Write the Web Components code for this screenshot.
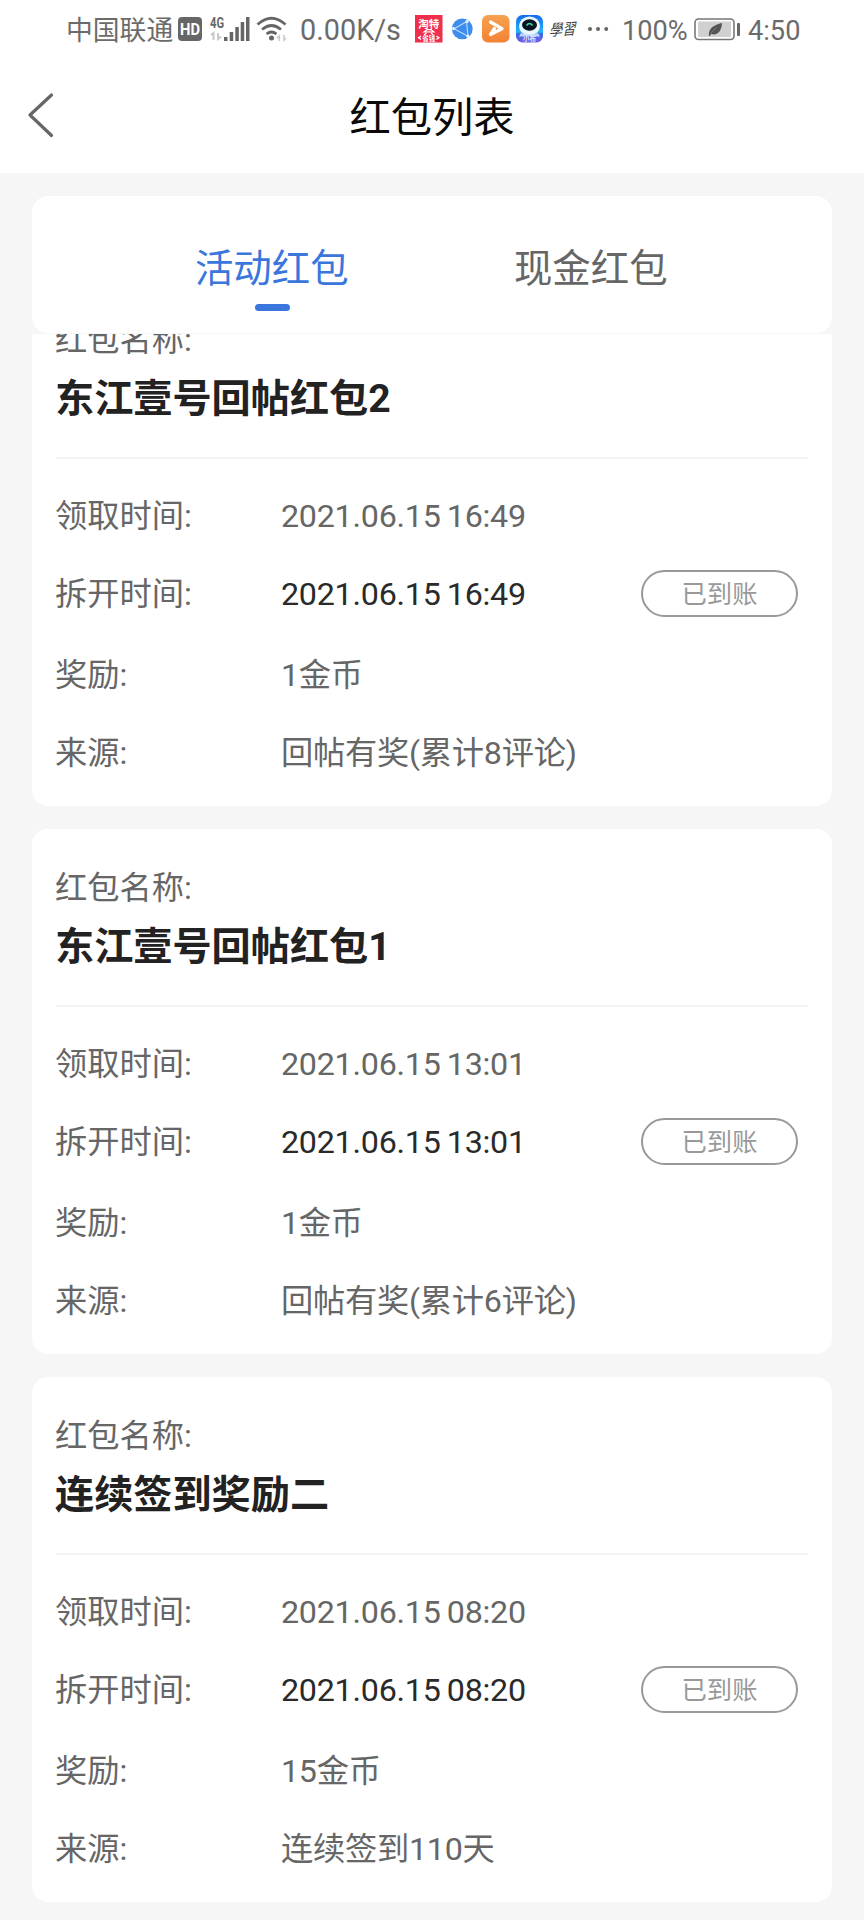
<!DOCTYPE html>
<html lang="zh-CN">
<head>
<meta charset="utf-8">
<title>红包列表</title>
<style>
html,body{margin:0;background:#f6f6f6}
body{width:864px;height:1920px;overflow:hidden;font-family:Roboto,"Noto Sans CJK SC",sans-serif;color:#666}
</style>
</head>
<body>
<red-packet-page></red-packet-page>
<script>
const define = (name, html) => {
  const t = document.createElement('template');
  t.innerHTML = html;
  customElements.define(name, class extends HTMLElement {
    constructor() {
      super();
      this.attachShadow({ mode: 'open' }).appendChild(t.content.cloneNode(true));
    }
  });
};

define('status-bar', `
<style>
:host{display:flex;align-items:center;height:60px;box-sizing:border-box;padding-left:66px;background:#fff;color:#6b6b6b;white-space:nowrap;line-height:36px}
svg{display:block;flex:none}
.carrier{width:111px;font-size:26.8px;padding-top:1px;box-sizing:border-box}
.speed{width:114px;font-size:28.8px;margin-left:11px}
.pct{font-size:27.2px;width:72px;margin-left:10px;padding-top:1px}
.time{font-size:27.2px;margin-left:8px;padding-top:1px}
span{flex:none}
text{font-family:Roboto,"Noto Sans CJK SC",sans-serif}
</style>
<span class="carrier">中国联通</span>
<svg width="112" height="60" viewBox="177 0 112 60">
  <rect x="178" y="17" width="24" height="24" rx="4" fill="#666"/>
  <text x="190" y="34.6" text-anchor="middle" font-size="16" font-weight="700" fill="#fff" textLength="20" lengthAdjust="spacingAndGlyphs">HD</text>
  <text x="210" y="27.5" font-size="14" font-weight="700" fill="#666" textLength="14" lengthAdjust="spacingAndGlyphs">4G</text>
  <path d="M211 35l2.500-2v7M218 33v6l3-2.500" fill="none" stroke="#c8c8c8" stroke-width="2"/>
  <g fill="#666"><rect x="224" y="37" width="3.500" height="4"/><rect x="229.700" y="32" width="3.500" height="9"/><rect x="235.300" y="27" width="3.500" height="14"/><rect x="240.700" y="22" width="3.500" height="19"/><rect x="246" y="17" width="3.500" height="24"/></g>
  <g fill="none" stroke="#666" stroke-width="2.700"><path d="M257.500 24.500q14-12.500 28 0M262 29.500q9.500-8 19 0M266.500 34q5-4 10 0"/></g>
  <circle cx="271.500" cy="38" r="2.500" fill="#666"/>
  <path d="M277 38l2.300-2v5M284 35v5l2-2" fill="none" stroke="#ccc" stroke-width="1.700"/>
</svg>
<span class="speed">0.00K/s</span>
<svg width="198" height="60" viewBox="414 0 198 60">
  <defs>
    <linearGradient id="o" x2="0" y2="1"><stop stop-color="#f5a251"/><stop offset="1" stop-color="#f58134"/></linearGradient>
    <linearGradient id="b" x2="0" y2="1"><stop stop-color="#146af0"/><stop offset=".62" stop-color="#27b6f6"/><stop offset=".68" stop-color="#3769e8"/><stop offset="1" stop-color="#7761dc"/></linearGradient>
  </defs>
  <rect x="415" y="15" width="27.500" height="27.500" fill="#f02f4d"/>
  <text x="428.700" y="28" text-anchor="middle" font-size="10.500" font-weight="700" fill="#fff">淘特</text>
  <path d="M424 32h10l-3-2.500h-4zM424 35l2.500-2M433.500 35l-2.500-2M421 36l-2.500 1.700 2.500 1.700M436.500 36l2.500 1.700-2.500 1.700" stroke="#fff" stroke-width="1.200" fill="#fff" fill-opacity=".3"/>
  <text x="428.700" y="40.500" text-anchor="middle" font-size="6.500" font-weight="700" fill="#fff">省钱</text>
  <circle cx="462.300" cy="28.800" r="10.400" fill="#3e8cec"/>
  <path d="M454 28.800l12.500-7M454 28.800l13.500 7.200M466.500 21.800l1.500 14" fill="none" stroke="#b9dcff" stroke-width="1.100"/>
  <circle cx="453.500" cy="28.500" r="1.600" fill="#e9f7ff"/><circle cx="467" cy="21.500" r="1.600" fill="#e9f7ff"/><circle cx="468" cy="36.200" r="1.600" fill="#e9f7ff"/>
  <rect x="482" y="15" width="27.500" height="27.500" rx="6" fill="url(#o)"/>
  <path d="M490.500 22l11.500 6.700-11.500 5.800 4-6" fill="none" stroke="#fff" stroke-width="3.200" stroke-linejoin="round" stroke-linecap="round"/>
  <rect x="516" y="15" width="27" height="27.500" rx="6.500" fill="url(#b)"/>
  <ellipse cx="529.500" cy="26" rx="10.500" ry="9.500" fill="#e9f7ff"/><path d="M521 33q8.500 3 17 0l2 3.500h-21z" fill="#bcd8ff"/>
  <ellipse cx="529.500" cy="25" rx="7.500" ry="5.800" fill="#07131e"/>
  <path d="M526.500 25.500q3-4 6 0" fill="none" stroke="#35dbab" stroke-width="1.500"/>
  <text x="529.500" y="41" text-anchor="middle" font-size="6.500" font-weight="700" fill="#e4e5ff">小布</text>
  <g transform="translate(549 36) skewX(-16) rotate(-4)"><text x="0" y="0" font-size="16" fill="#444" textLength="26" lengthAdjust="spacingAndGlyphs" style="font-family:'Noto Sans CJK TC',sans-serif">學習</text></g>
  <g fill="#666"><circle cx="590" cy="29" r="2"/><circle cx="598" cy="29" r="2"/><circle cx="606.200" cy="29" r="2"/></g>
</svg>
<span class="pct">100%</span>
<svg width="46" height="60" viewBox="694 0 46 60">
  <rect x="695" y="19" width="39" height="20.500" rx="3.500" fill="#fff" stroke="#777" stroke-width="1.600"/>
  <rect x="698" y="21.500" width="33" height="15.500" rx="1" fill="#d0d0d0"/>
  <path d="M709 36c-1-8 5-11 13-13-.5 8-4 13-11 11l-1 2z" fill="#555"/>
  <path d="M711 33l6-6" stroke="#888" stroke-width=".7"/>
  <rect x="737" y="23" width="3" height="13" rx="1" fill="#666"/>
</svg>
<span class="time">4:50</span>`);

define('nav-bar', `
<style>
:host{display:grid;grid-template-columns:80px 1fr 80px;align-items:center;height:113px;background:#fff;color:#0a0a0a;text-align:center;font-size:41.3px;line-height:60px}
svg{display:block}
h1{font:inherit;margin:2px 0 0}
</style>
<svg width="80" height="113" viewBox="0 60 80 113"><path d="M51.500 95L30 115 51.500 135.500" fill="none" stroke="#666" stroke-width="3.200" stroke-linecap="round" stroke-linejoin="round"/></svg>
<h1><slot></slot></h1>`);

define('tab-item', `
<style>
:host{display:flex;flex-direction:column;align-items:center;width:319px;font-size:38.4px;line-height:56px;color:#666}
span{margin-left:-1.500px}
i{width:34.500px;height:7px;border-radius:4px;margin-top:7px}
:host([active]){color:#3a76dc}
:host([active]) i{background:#3a76dc}
</style>
<span><slot></slot></span><i></i>`);

define('tab-bar', `
<style>
:host{display:flex;justify-content:center;height:137px;box-sizing:border-box;padding-top:45px;background:#fff;border-radius:16px}
</style>
<slot></slot>`);

define('state-badge', `
<style>
:host{display:flex;align-items:center;justify-content:center;box-sizing:border-box;width:157px;height:46.500px;border:2.400px solid #999;border-radius:24px;color:#999;font-size:25.300px;line-height:36px;letter-spacing:0}
span{padding-top:2px}
</style>
<span><slot></slot></span>`);

define('info-row', `
<style>
:host{display:flex;align-items:center;height:48px;font-size:32.256px;line-height:48px;color:#666}
.label{width:226px;flex:none;margin-left:-1px}
.value{flex:1;letter-spacing:-.25px;word-spacing:-1.500px}
:host([strong]) .value{color:#2a2a2a}
::slotted(state-badge){margin-right:10px}
</style>
<span class="label"><slot name="label"></slot></span><span class="value"><slot></slot></span><slot name="badge"></slot>`);

define('packet-card', `
<style>
:host{display:block;box-sizing:border-box;height:525px;flex:none;padding:35px 24px 0;background:#fff;border-radius:16px}
.name{font-size:32.256px;line-height:48px;margin-left:-1px}
h2{margin:6px 0 29px -1px;font-size:39.170px;line-height:58px;font-weight:700;color:#222}
.line{height:2px;background:#f4f4f4}
.rows{display:grid;grid-template-rows:48px 48px 48px 48px;padding-top:33px}
::slotted(info-row:nth-of-type(2)){margin-top:29.700px}
.rows{display:flex;flex-direction:column}
::slotted(info-row:nth-of-type(3)){margin-top:33.300px}
::slotted(info-row:nth-of-type(4)){margin-top:30px}
</style>
<div class="name">红包名称:</div>
<h2><slot name="title"></slot></h2>
<div class="line"></div>
<div class="rows"><slot></slot></div>`);

define('packet-list', `
<style>
:host{display:flex;flex-direction:column;height:1586px;margin-top:1px;overflow:hidden}
.track{display:flex;flex-direction:column;gap:23px;margin-top:-53px}
</style>
<div class="track"><slot></slot></div>`);

const packets = [
  ['东江壹号回帖红包2', '2021.06.15 16:49', '1金币', '回帖有奖(累计8评论)'],
  ['东江壹号回帖红包1', '2021.06.15 13:01', '1金币', '回帖有奖(累计6评论)'],
  ['连续签到奖励二', '2021.06.15 08:20', '15金币', '连续签到110天']
];
const label = s => `<span slot="label">${s}:</span>`;
const card = ([title, time, reward, source]) => `
<packet-card><span slot="title">${title}</span>
<info-row>${label('领取时间')}${time}</info-row>
<info-row strong>${label('拆开时间')}${time}<state-badge slot="badge">已到账</state-badge></info-row>
<info-row>${label('奖励')}${reward}</info-row>
<info-row>${label('来源')}${source}</info-row>
</packet-card>`;

define('red-packet-page', `
<style>
:host{display:flex;flex-direction:column;width:864px;height:1920px;overflow:hidden}
main{padding:23px 32px 0}
</style>
<status-bar></status-bar>
<nav-bar>红包列表</nav-bar>
<main>
<tab-bar><tab-item active>活动红包</tab-item><tab-item>现金红包</tab-item></tab-bar>
<packet-list>${packets.map(card).join('')}</packet-list>
</main>`);
</script>
</body>
</html>
